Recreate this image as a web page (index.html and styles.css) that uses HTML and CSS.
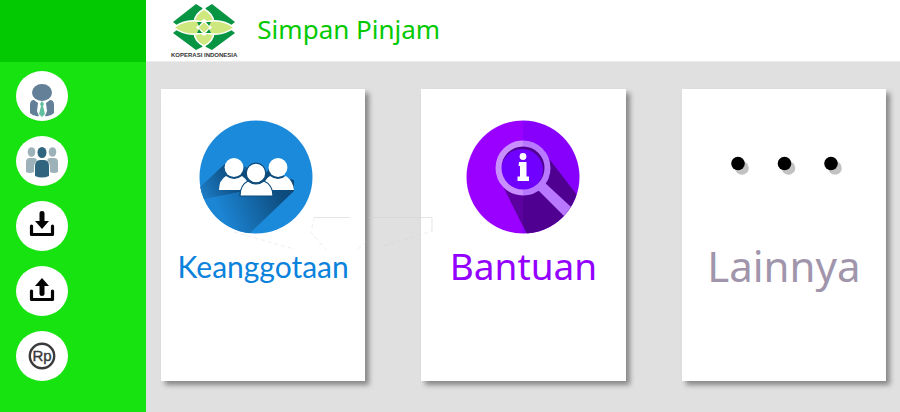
FILE: index.html
```html
<!DOCTYPE html>
<html lang="id">
<head>
<meta charset="utf-8">
<meta name="viewport" content="width=device-width, initial-scale=1">
<title>Simpan Pinjam</title>
<link rel="stylesheet" href="styles.css">
</head>
<body>
<div class="app">
  <aside class="sidebar">
    <div class="sidebar-top"></div>
    <nav class="menu" aria-label="Menu">
      <a class="menu-item" href="#" aria-label="Pengurus">
        <svg viewBox="0 0 52 50">
          <ellipse cx="26" cy="21.500" rx="10" ry="8.500" fill="#647f98"/>
          <path d="M18 29l4 3-1 8 2 5q-5 1-9-3v-8q0-5 4-5zM34 29l-4 3 1 8-2 5q5 1 9-3v-8q0-5-4-5z" fill="#647f98"/>
          <path d="M26 30l2 3-1 2 2 8-3 3-3-3 2-8-1-2z" fill="#62bfa0"/>
        </svg>
      </a>
      <a class="menu-item" href="#" aria-label="Anggota">
        <svg viewBox="0 0 52 50">
          <g fill="#9db1b9">
            <ellipse cx="15.500" cy="16" rx="3.800" ry="4.800"/><ellipse cx="36.500" cy="16" rx="3.800" ry="4.800"/>
            <path d="M10 36V26q0-4 4-4h4q2 0 3 2-3 3-3 8v4q-4 2-8 0zM42 36V26q0-4-4-4h-4q-2 0-3 2 3 3 3 8v4q4 2 8 0z"/>
          </g>
          <g fill="#31647f">
            <ellipse cx="26" cy="16.500" rx="4.500" ry="5.500"/>
            <path d="M19 40V30q0-6 5-6h4q5 0 5 6v10q-7 3-14 0z"/>
          </g>
        </svg>
      </a>
      <a class="menu-item" href="#" aria-label="Simpan">
        <svg viewBox="0 0 52 50">
          <path d="M15.500 25v8.500h21V25" fill="none" stroke="#050505" stroke-width="3.200" stroke-linecap="round" stroke-linejoin="round"/>
          <path d="M23.500 12q0-2 2.500-2t2.500 2v8H33l-7 8-7-8h4.500z" fill="#050505"/>
        </svg>
      </a>
      <a class="menu-item" href="#" aria-label="Pinjam">
        <svg viewBox="0 0 52 50">
          <path d="M15.500 25v8.500h21V25" fill="none" stroke="#050505" stroke-width="3.200" stroke-linecap="round" stroke-linejoin="round"/>
          <path d="M23.500 28q0 2 2.500 2t2.500-2v-8H33l-7-8-7 8h4.500z" fill="#050505"/>
        </svg>
      </a>
      <a class="menu-item" href="#" aria-label="Rupiah">
        <svg viewBox="0 0 52 50">
          <circle cx="26" cy="25" r="12.200" fill="none" stroke="#3a3a3d" stroke-width="2.400"/>
          <text class="rp" x="26" y="30" text-anchor="middle">Rp</text>
        </svg>
      </a>
    </nav>
  </aside>

  <header class="header">
    <div class="logo">
      <svg class="logo-mark" viewBox="0 0 62 47">
        <path d="M23 0L31 5 39 0 62 18 55 23.500 62 29 39 46 31 42 23 46 0 29 7 23.500 0 18z" fill="#079443"/>
        <path d="M31 0v46M0 23.500h62" stroke="#fff" stroke-width="3"/>
        <g fill="#cfe77f" stroke="#fff" stroke-width="1.500">
          <path d="M31 5c13 7 13 20 0 26-13-6-13-19 0-26zM31 42c13-7 13-20 0-26-13 6-13 19 0 26z"/>
          <path d="M1 23.500c11-9 28-9 37 0-9 9-26 9-37 0zM61 23.500c-11-9-28-9-37 0 9 9 26 9 37 0z"/>
        </g>
        <path d="M24 18h5l-3 4zM38 18h-5l3 4zM24 29h5l-3-4zM38 29h-5l3-4z" fill="#079443"/>
        <path d="M31 18l6 5.500-6 5.500-6-5.500z" fill="#cfe77f" stroke="#fff"/>
      </svg>
      <span class="logo-name">KOPERASI INDONESIA</span>
    </div>
    <h1 class="title">Simpan Pinjam</h1>
  </header>

  <main class="cards">
    <a class="card card-members" href="#">
      <svg class="card-icon" viewBox="0 0 114 114">
        <defs>
          <clipPath id="disc"><circle cx="57" cy="57" r="56.500"/></clipPath>
          <linearGradient id="shade" x1="80" y1="65" x2="20" y2="90" gradientUnits="userSpaceOnUse">
            <stop offset="0" stop-color="#0d4b7c"/><stop offset="1" stop-color="#1c85d4"/>
          </linearGradient>
          <linearGradient id="shade-left" x1="35" y1="55" x2="2" y2="72" gradientUnits="userSpaceOnUse">
            <stop offset="0" stop-color="#0d4b7c"/><stop offset="1" stop-color="#1c7cc5"/>
          </linearGradient>
        </defs>
        <g clip-path="url(#disc)">
          <path d="M0 0h114v114H0z" fill="#1c8adb"/>
          <path d="M28 42L0 68v46h50l45-43V60z" fill="url(#shade)"/>
          <path d="M28 42L0 68v12l45-9V50z" fill="url(#shade-left)"/>
          <path d="M42 53l12-9 12 10 9-11 10 14-28 14z" fill="#0d4b7c"/>
        </g>
        <g fill="#fff">
          <path d="M20 70q0-10 7-14 8 6 16 0 7 5 8 14zM64 70q0-10 7-14 8 6 16 0 7 5 8 14z"/>
          <g stroke="#0d4b7c" stroke-width="1.200">
            <path d="M41 76q0-11 8-15 8 6 16 0 9 4 9 15z"/>
            <circle cx="57" cy="53" r="9.800"/>
          </g>
          <circle cx="35" cy="47.500" r="9.400"/><circle cx="79" cy="47.500" r="9.400"/>
        </g>
      </svg>
      <span class="card-label">Keanggotaan</span>
    </a>

    <a class="card card-help" href="#">
      <svg class="card-icon" viewBox="0 0 114 114">
        <g clip-path="url(#disc)">
          <path d="M0 0h57v114H0z" fill="#9900ff"/>
          <path d="M57 0h57v114H57z" fill="#8600fb"/>
          <path d="M36 64L61 114h53V79L84 40z" fill="#500090"/>
          <path d="M36 64l21 42V70z" fill="#5c009f"/>
          <path d="M78 62l38 35-7 10-38-38z" fill="#b878ff"/>
        </g>
        <circle cx="57" cy="48" r="22" fill="#500090"/>
        <circle cx="56" cy="50" r="21" fill="#7000ff"/>
        <path d="M57 23.500a24.500 24.500 0 0 0 0 49" fill="none" stroke="#c98fff" stroke-width="6"/>
        <path d="M57 23.500a24.500 24.500 0 0 1 0 49" fill="none" stroke="#b878ff" stroke-width="6"/>
        <circle cx="57" cy="36.500" r="3.400" fill="#fff"/>
        <path d="M53 42h7.500v14.500H63V61H51.500v-4.500H54V46h-1.500z" fill="#fff"/>
      </svg>
      <span class="card-label">Bantuan</span>
    </a>

    <a class="card card-more" href="#">
      <svg class="card-icon" viewBox="0 0 114 114">
        <g fill="#c2c2c2"><circle cx="15" cy="48" r="6.800"/><circle cx="61.500" cy="48" r="6.800"/><circle cx="108" cy="48" r="6.800"/></g>
        <g fill="#000"><circle cx="11" cy="43.500" r="6.800"/><circle cx="57.500" cy="43.500" r="6.800"/><circle cx="104" cy="43.500" r="6.800"/></g>
      </svg>
      <span class="card-label">Lainnya</span>
    </a>

    <svg class="trace" viewBox="0 0 200 36" aria-hidden="true">
      <g fill="none" stroke="#c9cfcc" stroke-opacity=".5">
        <path d="M80 1.500h36M135 1.500h63v14"/>
        <path d="M80 1.500l-3 15 15 17M0 16l60 17M124 33l10-9M150 30l48-15" stroke-dasharray="4 3" stroke-opacity=".35"/>
      </g>
    </svg>
  </main>
</div>
</body>
</html>
```
FILE: styles.css
```css
* {
  box-sizing: border-box;
}

body {
  margin: 0;
  font-family: "Noto Sans", "Open Sans", sans-serif;
  background: #e0e0e0;
}

a {
  color: inherit;
  text-decoration: none;
}

svg {
  display: block;
}

.app {
  display: grid;
  grid-template-columns: 146px 1fr;
  grid-template-rows: 62px 1fr;
  min-height: 100vh;
}

.sidebar {
  grid-row: 1 / 3;
  background: #17e310;
}

.sidebar-top {
  height: 62px;
  background: #02c902;
}

.menu {
  display: flex;
  flex-direction: column;
  gap: 15px;
  padding: 9px 16px;
}

.menu-item {
  width: 52px;
  height: 50px;
  border-radius: 50%;
  background: #fff;
}

.rp {
  font: 15px "Liberation Sans", sans-serif;
  fill: #3a3a3d;
  stroke: #3a3a3d;
  stroke-width: 0.4px;
}

.header {
  display: flex;
  align-items: flex-start;
  gap: 20px;
  padding: 4px 25px 0;
  background: #fff;
  border-bottom: 1px solid #ececec;
}

.logo {
  display: flex;
  flex-direction: column;
  align-items: center;
}

.logo-mark {
  width: 62px;
  height: 47px;
}

.logo-name {
  font: bold 6px/8px "Liberation Sans", sans-serif;
  color: #333;
  white-space: nowrap;
}

.title {
  margin: 0;
  font-size: 26px;
  font-weight: 400;
  line-height: 50px;
  color: #02c902;
}

.cards {
  position: relative;
  display: grid;
  grid-template-columns: repeat(3, 1fr);
  gap: 56px;
  padding: 27px 14px 31px 15px;
}

.card {
  display: flex;
  flex-direction: column;
  align-items: center;
  gap: 6px;
  padding: 31px 8px;
  background: #fff;
  box-shadow: 4px 4px 5px #888;
}

.card-icon {
  width: 114px;
  height: 114px;
  overflow: visible;
}

.card-label {
  line-height: 52px;
}

.card-members .card-icon {
  margin-right: 14px;
}

.card-members .card-label {
  font-family: Lato, "Noto Sans", sans-serif;
  font-size: 30px;
  color: #0b82dc;
}

.card-help .card-label {
  font-size: 37px;
  color: #9300ff;
}

.card-more .card-label {
  font-size: 42px;
  color: #a195ac;
}

.trace {
  position: absolute;
  top: 154px;
  left: 88px;
  width: 200px;
  height: 36px;
  pointer-events: none;
}
```
